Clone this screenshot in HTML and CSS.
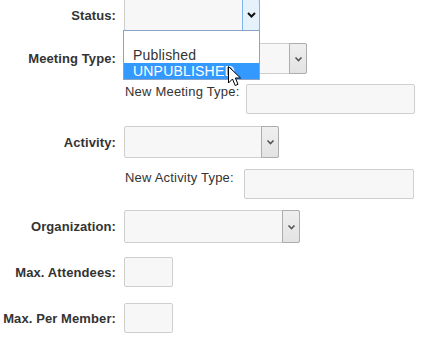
FILE: index.html
```html
<!DOCTYPE html>
<html>
<head>
<meta charset="utf-8">
<link rel="stylesheet" href="styles.css">
</head>
<body>
<form class="form">
  <div class="row row-status">
    <label class="lbl">Status:</label>
    <div class="ctl">
      <div class="select select-status focused">
        <span class="fill"></span>
        <span class="arrow"><svg width="9" height="6" viewBox="0 0 9 6"><path d="M1 1 L4.5 4.5 L8 1" fill="none" stroke="#111" stroke-width="2"/></svg></span>
      </div>
      <ul class="dropdown">
        <li class="opt"></li>
        <li class="opt">Published</li>
        <li class="opt sel">UNPUBLISHED</li>
      </ul>
      <svg class="cursor" width="14" height="22" viewBox="0 0 14 22"><path d="M0.5 0.5 L0.5 17 L4.5 13 L7.2 19.5 L10 18.3 L7.4 12 L12.5 12 Z" fill="#fff" stroke="#000" stroke-width="1"/></svg>
    </div>
  </div>

  <div class="row row-meeting">
    <label class="lbl">Meeting Type:</label>
    <div class="select select-meeting">
      <span class="fill"></span>
      <span class="arrow"><svg width="9" height="6" viewBox="0 0 9 6"><path d="M1.5 1.5 L4.5 4.5 L7.5 1.5" fill="none" stroke="#555" stroke-width="1.6"/></svg></span>
    </div>
  </div>

  <div class="sub sub-meeting">
    <span class="sublbl">New Meeting Type:</span>
    <div class="input input-meeting"></div>
  </div>

  <div class="row row-activity">
    <label class="lbl">Activity:</label>
    <div class="select select-activity">
      <span class="fill"></span>
      <span class="arrow"><svg width="9" height="6" viewBox="0 0 9 6"><path d="M1.5 1.5 L4.5 4.5 L7.5 1.5" fill="none" stroke="#555" stroke-width="1.6"/></svg></span>
    </div>
  </div>

  <div class="sub sub-activity">
    <span class="sublbl">New Activity Type:</span>
    <div class="input input-activity"></div>
  </div>

  <div class="row row-org">
    <label class="lbl">Organization:</label>
    <div class="select select-org">
      <span class="fill"></span>
      <span class="arrow"><svg width="9" height="6" viewBox="0 0 9 6"><path d="M1.5 1.5 L4.5 4.5 L7.5 1.5" fill="none" stroke="#555" stroke-width="1.6"/></svg></span>
    </div>
  </div>

  <div class="row row-att">
    <label class="lbl">Max. Attendees:</label>
    <div class="input input-small"></div>
  </div>

  <div class="row row-per">
    <label class="lbl">Max. Per Member:</label>
    <div class="input input-small"></div>
  </div>
</form>
</body>
</html>
```

FILE: styles.css
```css
html, body {
  margin: 0;
  padding: 0;
  background: #fff;
}
body {
  font-family: "Liberation Sans", Arial, sans-serif;
  font-size: 13px;
  color: #333;
  overflow: hidden;
}
.form {
  display: flex;
  flex-direction: column;
  margin-top: -1px;
}
.row {
  display: flex;
  align-items: center;
}
.lbl {
  width: 116px;
  margin-right: 8px;
  text-align: right;
  font-weight: bold;
  font-size: 13px;
  letter-spacing: 0.1px;
  color: #333;
  flex: none;
  white-space: nowrap;
}
.ctl {
  position: relative;
}
.select {
  display: flex;
  box-sizing: border-box;
  height: 32px;
  border: 1px solid #cfcfcf;
  border-radius: 2px;
  background: #f7f7f7;
}
.fill {
  flex: 1;
}
.arrow {
  box-sizing: border-box;
  width: 18px;
  margin: -1px -1px -1px 0;
  border: 1px solid #adadad;
  border-radius: 0 2px 2px 0;
  background: linear-gradient(#efefef, #e3e3e3);
  display: flex;
  align-items: center;
  justify-content: center;
}
.arrow svg {
  display: block;
}
.focused .arrow {
  background: #e5f1fb;
  border-color: #7eb4ea;
}
.select-status { width: 136px; }
.select-meeting { width: 183px; height: 31px; }
.select-activity { width: 155px; }
.select-org { width: 176px; height: 33px; }

.row-meeting { margin-top: 12px; }
.row-activity { margin-top: 12px; }
.row-org { margin-top: 11px; }
.row-att { margin-top: 14px; }
.row-per { margin-top: 16px; }

.dropdown {
  position: absolute;
  left: -1px;
  top: 31px;
  width: 137px;
  box-sizing: border-box;
  margin: 0;
  padding: 0;
  list-style: none;
  background: #fff;
  border: 1px solid #8ba3c4;
  z-index: 5;
}
.opt {
  height: 16px;
  line-height: 16px;
  padding-left: 9px;
  font-size: 14px;
  letter-spacing: 0.2px;
  color: #333;
  white-space: nowrap;
}
.opt.sel {
  background: #3399ff;
  color: #fff;
}
.cursor {
  position: absolute;
  left: 104px;
  top: 67px;
  z-index: 6;
}

.sub {
  display: flex;
  align-items: flex-start;
  padding-left: 124px;
}
.sub-meeting { margin-top: 10px; gap: 10px; }
.sub-activity { margin-top: 11px; gap: 9px; }
.sublbl {
  font-size: 13px;
  letter-spacing: 0.2px;
  color: #333;
  line-height: 15px;
  margin-left: 1px;
  white-space: nowrap;
  flex: none;
}
.sub-meeting .sublbl { width: 111px; margin-top: 0; }
.sub-activity .sublbl { width: 110px; margin-top: 1px; }
.input {
  box-sizing: border-box;
  height: 30px;
  border: 1px solid #cfcfcf;
  border-radius: 2px;
  background: #f7f7f7;
}
.input-meeting { width: 169px; }
.input-activity { width: 170px; }
.input-small { width: 49px; }
```
